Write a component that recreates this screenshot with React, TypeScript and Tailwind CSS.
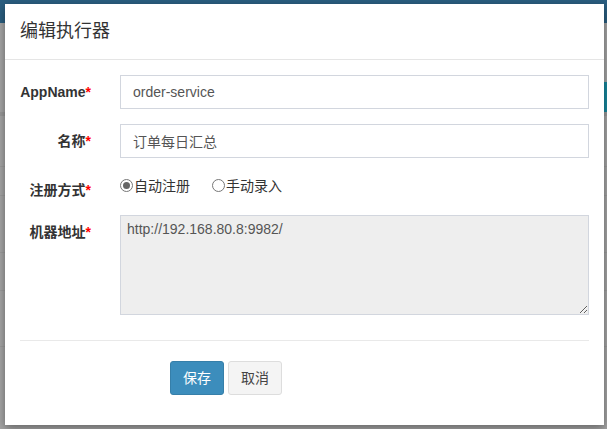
import React from 'react';

const font = "font-['Liberation_Sans','Noto_Sans_CJK_SC',sans-serif]";

function Label({ text }: { text: string }) {
  return (
    <label className="w-[71px] shrink-0 pt-[7px] text-right text-[14px] leading-[20px] font-bold text-[#333]">
      {text}
      <span className="text-[#f00]">*</span>
    </label>
  );
}

function Radio({ checked, text }: { checked?: boolean; text: string }) {
  return (
    <span className="flex items-center text-[14px] leading-[20px] text-[#333]">
      <span className="flex h-[13px] w-[13px] items-center justify-center rounded-full border border-[#777] bg-white">
        {checked && <span className="h-[7px] w-[7px] rounded-full bg-[#666]" />}
      </span>
      <span className="ml-[1px]">{text}</span>
    </span>
  );
}

export default function App() {
  return (
    <div className={`relative h-[429px] w-[607px] overflow-hidden bg-[#a5a5a5] ${font}`}>
      {/* page behind the backdrop */}
      <div className="h-[23px] bg-[#2a5e80]" />
      <div className="h-[59px]" />
      <div className="flex h-[30px] justify-end">
        <div className="w-[3px] bg-[#17889f]" />
      </div>
      <div className="h-[4px] bg-[#999]" />
      <div className="h-[51px] border-b border-[#9c9c9c]" />
      <div className="h-[29px] border-b border-[#9c9c9c]" />
      <div className="h-[57px] border-b border-[#9c9c9c]" />
      <div className="h-[38px] border-b border-[#9c9c9c]" />
      <div className="h-[56px] border-b border-[#9c9c9c]" />

      {/* modal */}
      <div className="absolute left-[5px] top-[4px] flex h-[421px] w-[599px] flex-col bg-white shadow-[0_3px_9px_rgba(0,0,0,0.4)]">
        <div className="border-b border-[#e5e5e5] p-[15px]">
          <h4 className="text-[18px] leading-[25px] text-[#333]">编辑执行器</h4>
        </div>

        <div className="flex flex-col px-[15px] pt-[15px]">
          <div className="mb-[15px] flex">
            <Label text="AppName" />
            <input
              readOnly
              value="order-service"
              className="ml-[29px] h-[34px] w-[470px] border border-[#d2d6de] px-[12px] text-[14px] text-[#555] outline-none"
            />
          </div>
          <div className="mb-[15px] flex">
            <Label text="名称" />
            <input
              readOnly
              value="订单每日汇总"
              className="ml-[29px] h-[34px] w-[470px] border border-[#d2d6de] px-[12px] text-[14px] text-[#555] outline-none"
            />
          </div>
          <div className="mb-[15px] flex">
            <Label text="注册方式" />
            <div className="-mt-[2px] ml-[29px] flex gap-[22px]">
              <Radio checked text="自动注册" />
              <Radio text="手动录入" />
            </div>
          </div>
          <div className="flex">
            <Label text="机器地址" />
            <textarea
              readOnly
              value="http://192.168.80.8:9982/"
              className="ml-[29px] h-[100px] w-[470px] resize-y border border-[#d2d6de] bg-[#eee] px-[6px] py-[3px] text-[14px] leading-[20px] text-[#555] outline-none"
            />
          </div>

          <div className="mt-[25px] h-px w-[569px] bg-[#e9e9e9]" />

          <div className="ml-[150px] mt-[20px] flex gap-[4px]">
            <button className="h-[34px] rounded-[3px] border border-[#367fa9] bg-[#3c8dbc] px-[12px] text-[14px] text-white">
              保存
            </button>
            <button className="h-[34px] rounded-[3px] border border-[#ddd] bg-[#f4f4f4] px-[12px] text-[14px] text-[#444]">
              取消
            </button>
          </div>
        </div>
      </div>
    </div>
  );
}
